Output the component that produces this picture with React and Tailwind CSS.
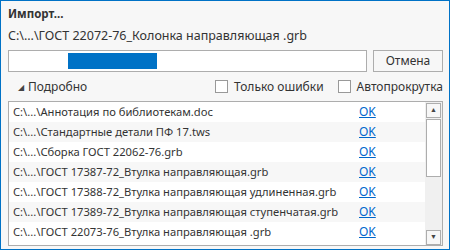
const ROWS = [
  "C:\\...\\Аннотация по библиотекам.doc",
  "C:\\...\\Стандартные детали ПФ 17.tws",
  "C:\\...\\Сборка ГОСТ 22062-76.grb",
  "C:\\...\\ГОСТ 17387-72_Втулка направляющая.grb",
  "C:\\...\\ГОСТ 17388-72_Втулка направляющая удлиненная.grb",
  "C:\\...\\ГОСТ 17389-72_Втулка направляющая ступенчатая.grb",
  "C:\\...\\ГОСТ 22073-76_Втулка направляющая .grb",
];

function Check({ label }) {
  return (
    <label className="flex items-center gap-[6px]">
      <span className="w-[13px] h-[13px] border border-[#999] bg-white" />
      <span>{label}</span>
    </label>
  );
}

export default function App() {
  return (
    <div
      className="w-[450px] h-[250px] bg-[#f7f7f7] border border-[#0072c6] text-[12px] text-[#333] flex flex-col overflow-hidden"
      style={{ fontFamily: '"Segoe UI", "Noto Sans", sans-serif' }}
    >
      <div className="pl-[7px] pt-[4px] font-bold text-[11.5px] leading-[18px]">Импорт...</div>
      <div className="pl-[7px] pt-[4px] text-[12.5px] leading-[18px]">C:\...\ГОСТ 22072-76_Колонка направляющая .grb</div>

      <div className="flex items-center gap-[6px] pl-[7px] pr-[6px] mt-[5px]">
        <div className="flex-1 h-[22px] border border-[#adadad] bg-white p-[2px]">
          <div className="h-full ml-[57px] w-[89px] bg-[#0072c6]" />
        </div>
        <button className="w-[70px] h-[22px] border border-[#adadad] bg-[#f7f7f7]">Отмена</button>
      </div>

      <div className="flex items-center h-[29px] pl-[17px] pr-[6px]">
        <span className="text-[8px] text-[#444] mr-[4px]">◢</span>
        <span>Подробно</span>
        <div className="ml-auto flex gap-[14px]">
          <Check label="Только ошибки" />
          <Check label="Автопрокрутка" />
        </div>
      </div>

      <div className="ml-[7px] mr-[6px] flex-1 border border-[#adadad] bg-white flex overflow-hidden">
        <div className="flex-1 text-[11.2px]">
          {ROWS.map((r, i) => (
            <div
              key={r}
              className={`flex items-center h-[20px] pl-[4px] ${i % 2 ? "bg-[#f7f7f7]" : "bg-white"}`}
            >
              <span className="w-[346px] whitespace-nowrap overflow-hidden">{r}</span>
              <a className="text-[12px] text-[#0066cc] underline">OK</a>
            </div>
          ))}
        </div>
        <div className="w-[17px] bg-[#f0f0f0] flex flex-col items-center gap-[1px] pt-[1px]">
          <div className="w-[15px] h-[15px] border border-[#adadad] bg-[#f7f7f7] flex items-center justify-center text-[7px] text-[#444]">▲</div>
          <div className="w-[15px] h-[58px] border border-[#adadad] bg-white" />
          <div className="mt-auto w-[15px] h-[15px] border border-[#adadad] bg-[#f7f7f7] flex items-center justify-center text-[7px] text-[#444]">▼</div>
        </div>
      </div>
      <div className="h-[3px]" />
    </div>
  );
}
